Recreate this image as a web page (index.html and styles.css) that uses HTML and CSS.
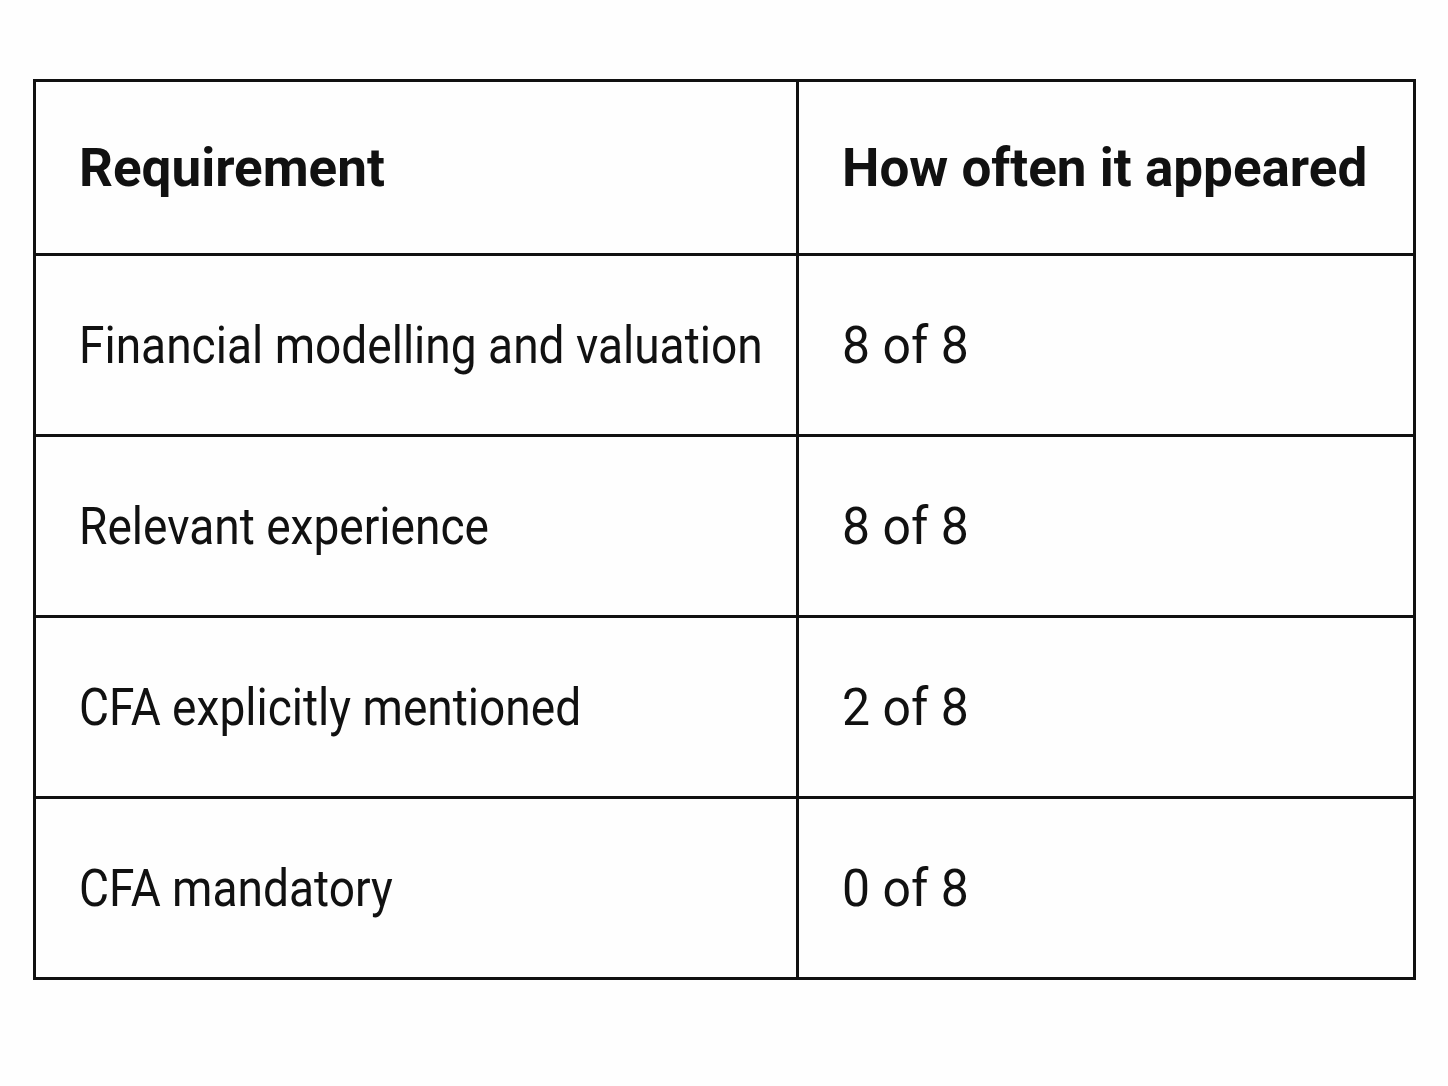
FILE: index.html
```html
<!DOCTYPE html>
<html>
<head>
<meta charset="utf-8">
<link rel="stylesheet" href="styles.css">
</head>
<body>
<div class="page">
  <table class="grid">
    <thead>
      <tr class="head">
        <th class="c1">Requirement</th>
        <th class="c2">How often it appeared</th>
      </tr>
    </thead>
    <tbody>
      <tr><td><span class="t">Financial modelling and valuation</span></td><td><span class="t num">8 of 8</span></td></tr>
      <tr><td><span class="t">Relevant experience</span></td><td><span class="t num">8 of 8</span></td></tr>
      <tr><td><span class="t">CFA explicitly mentioned</span></td><td><span class="t num">2 of 8</span></td></tr>
      <tr><td><span class="t">CFA mandatory</span></td><td><span class="t num">0 of 8</span></td></tr>
    </tbody>
  </table>
</div>
</body>
</html>
```

FILE: styles.css
```css
html, body {
  margin: 0;
  padding: 0;
  background: #fefefe;
}
.page {
  padding: 79px 0 0 33px;
}
.grid {
  border-collapse: collapse;
  width: 1383px;
  table-layout: fixed;
  font-family: Roboto, "Liberation Sans", sans-serif;
  color: #111;
}
.grid th, .grid td {
  border: 3px solid #111;
  padding: 0 0 0 43px;
  text-align: left;
  vertical-align: middle;
  white-space: nowrap;
  overflow: visible;
}
.grid .c1 { width: 717px; }
.head th {
  height: 171px;
  font-weight: 700;
  font-size: 53px;
}
.grid td {
  height: 178px;
  font-weight: 400;
  font-size: 52px;
}
.t {
  display: inline-block;
  transform: scaleX(0.886);
  transform-origin: left center;
}
.t.num {
  transform: scaleX(0.96);
}
```
